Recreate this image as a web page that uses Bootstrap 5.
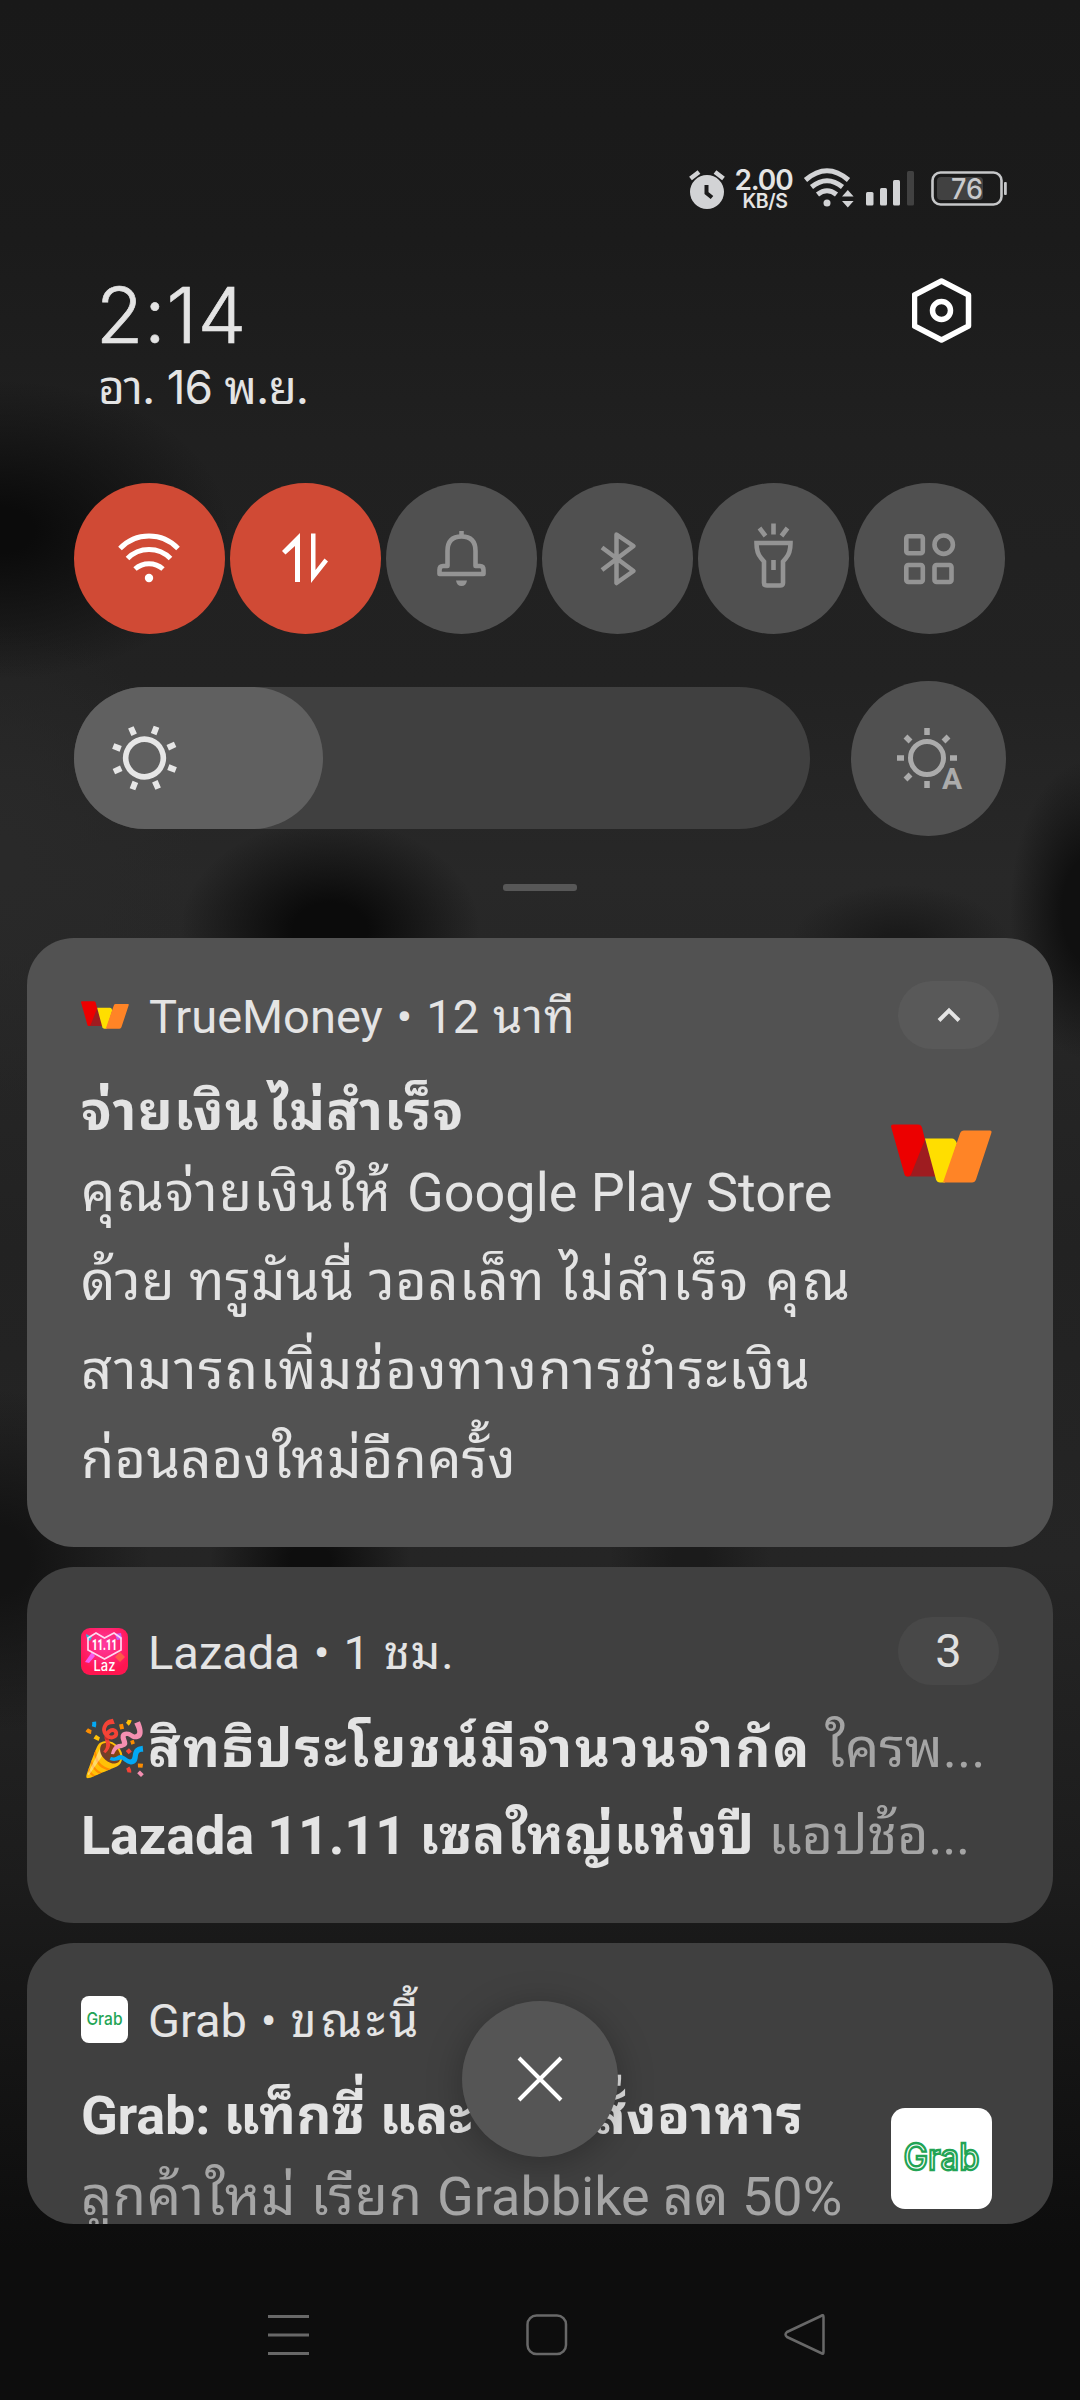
<!DOCTYPE html>
<html lang="th">
<head>
<meta charset="utf-8">
<meta name="viewport" content="width=device-width, initial-scale=1">
<title>Notifications</title>
<link href="https://cdn.jsdelivr.net/npm/bootstrap@5.3.0/dist/css/bootstrap.min.css" rel="stylesheet">
<style>
body{background:#0d0d0d;color:#e4e4e4;font-family:Roboto,"Noto Sans Thai Looped","Noto Sans Thai","Noto Sans",sans-serif}
.shade{width:1080px;height:2400px;overflow:hidden;
 background:
 radial-gradient(ellipse 230px 150px at 0 530px,#0b0b0b 15%,transparent 100%),
 radial-gradient(ellipse 150px 110px at 330px 930px,#0b0b0b 25%,transparent 100%),
 radial-gradient(ellipse 80px 150px at 1090px 910px,#101010 35%,transparent 100%),
 radial-gradient(ellipse 110px 60px at 900px 945px,#1a1a1a 20%,transparent 100%),
 radial-gradient(ellipse 150px 170px at 0 1560px,#131313 20%,transparent 100%),
 radial-gradient(ellipse 100px 90px at 310px 1560px,#0e0e0e 20%,transparent 100%),
 radial-gradient(ellipse 80px 90px at 690px 1560px,#1b1b1b 20%,transparent 100%),
 radial-gradient(ellipse 200px 240px at 0 860px,#292929 10%,transparent 100%),
 linear-gradient(#191919 0,#1b1b1b 240px,#202020 440px,#222 680px,#282828 880px,#222 1250px,#252525 1560px,#1c1c1c 1880px,#181818 1960px,#111 2150px,#0d0d0d 2250px,#0d0d0d 100%)}
svg{display:block;flex:none}
.status-row{height:213px;padding:165px 70px 0 0}
.net-speed{width:70px;height:48px;font-family:Inter,sans-serif;font-weight:600;text-align:center}
.net-speed .rate{font-size:28px;line-height:24px;letter-spacing:-1.1px;padding:3px 3px 0 0}
.net-speed .unit{font-size:19.5px;line-height:16px;letter-spacing:-.4px;margin-top:1px}
.clock-row{height:208px;margin-top:62px;padding:0 108px 0 96px}
.clock{font-family:Inter,sans-serif;font-size:77px;font-weight:300;-webkit-text-stroke:.7px #e4e4e4;line-height:80px;letter-spacing:.8px}
.today{font-family:Inter,"Noto Sans Thai Looped",sans-serif;font-size:46px;line-height:60px;margin:2px 0 0 2px;letter-spacing:-.8px}
.tiles{padding:0 75px 0 74px;height:151px}
.tile{width:151px;height:151px;padding:0;border:0;background:#505050;color:#949494}
.tile.on{background:#d04a35;color:#fff}
.bright-row{margin-top:47px;height:155px;padding:0 74px}
.slide-track{width:736px;height:142px;background:#404040;border-radius:71px;margin-bottom:1px}
.slide-fill{width:249px;height:142px;background:#606060;border-radius:71px}
.auto-btn{width:155px;height:155px;padding:0;border:0;background:#505050;color:#ababab}
.grip{width:74px;height:7px;border-radius:3px;background:#575757;margin:48px auto 47px}
.stack{gap:20px;padding:0 27px}
.note{background:#404040;border:0;border-radius:47px;padding:43px 54px 0;color:#e4e4e4;overflow:hidden;flex:none}
.note.open{background:#525252;height:609px}
.note.group{height:356px;padding-top:50px}
.note.cut{height:281px;padding-top:44px}
.note-head{height:68px}
.note-head .from{font-size:47px;line-height:60px;padding:4px 0 0 20px;white-space:nowrap;word-spacing:2.2px}
.chip{width:101px;height:68px;background:#595959;font-size:47px;line-height:68px}
.group .chip{background:#484848;color:#e0e0e0}
.ttl{font-size:54px;line-height:74px;font-weight:700;white-space:nowrap;margin-top:26px}
.open .txt:nth-child(2){margin-top:-1px}
.txt{font-size:54px;line-height:89px;white-space:nowrap}
.group .txt{line-height:87px}
.cut .ttl{line-height:81px;margin-top:24px}
.cut .txt{line-height:81px}
.dim{color:#a5a5a5}
.big-logo{margin-right:7px}
.fab{position:absolute;left:462px;top:2001px;width:156px;height:156px;padding:0;border:0;background:#555;box-shadow:0 6px 36px rgba(0,0,0,.28)}
.keys{margin-top:90px;padding:0 254px 0 266px}
</style>
</head>
<body>
<svg width="0" height="0" class="position-absolute" aria-hidden="true"><defs>
<g id="tm-mark">
<path d="M16 52 30 12 34 16 45 52Z" fill="#9e1c20"/>
<path d="M0 2Q0 0 2 0H27Q30 0 31 3L34 15 20 50Q19 52 17 52H16Q14 52 13.500 50Z" fill="#ec0000"/>
<path d="M34 14H61Q64 14 66 19L54 58H49Q46 58 45 55Z" fill="#ffde00"/>
<path d="M52 58 69 9Q70 6 73 6H99Q101 6 100.500 8L85 55Q84 58 81 58Z" fill="#ff8426"/>
</g></defs></svg>

<main class="shade position-relative d-flex flex-column">
 <header class="status-row d-flex justify-content-end flex-shrink-0">
  <svg width="42" height="48" viewBox="688 165 42 48"><circle cx="707" cy="192" r="17" fill="#d2d3d5"/><path d="M690.500 178.500 699 172M723.500 178.500 715 172" stroke="#d2d3d5" stroke-width="4.500"/><path d="M706.500 185V193L712 197.500" fill="none" stroke="#1c1c1c" stroke-width="4"/></svg>
  <div class="net-speed"><div class="rate">2.00</div><div class="unit">KB/S</div></div>
  <svg width="58" height="48" viewBox="800 165 58 48" fill="none" stroke="#d2d3d5" stroke-width="5"><path d="M805.500 180Q827 161.500 848.500 180M811.500 187Q827 174.500 842.500 187M817.500 194.500Q827 187 836.500 194.500"/><circle cx="827" cy="203" r="3.500" fill="#d2d3d5" stroke="none"/><path d="M842 196.500 847.800 190 853.600 196.500ZM842 201H853.600L847.800 207.500Z" fill="#d2d3d5" stroke="none"/></svg>
  <svg width="64" height="48" viewBox="858 165 64 48" fill="#d2d3d5"><rect x="866" y="192" width="7.500" height="13.500" rx="1.500"/><rect x="880" y="188" width="7" height="17.500" rx="1.500"/><rect x="893" y="180" width="7" height="25.500" rx="1.500"/><rect x="907" y="171" width="7" height="34.500" rx="1.500" fill="#414141"/></svg>
  <svg width="88" height="48" viewBox="922 165 88 48"><rect x="932.500" y="172.500" width="69" height="32" rx="8" fill="none" stroke="#c6c7c9" stroke-width="2.600"/><rect x="937" y="177" width="46" height="23" rx="4" fill="#414141"/><rect x="1004" y="182" width="2.800" height="13" rx="1" fill="#c6c7c9"/><text x="967" y="198.500" text-anchor="middle" font-family="Inter" font-weight="500" font-size="28" fill="#c9cacc" textLength="32" lengthAdjust="spacingAndGlyphs">76</text></svg>
 </header>

 <section class="clock-row d-flex justify-content-between align-items-start flex-shrink-0">
  <div><div class="clock">2:14</div><div class="today">อา. 16 พ.ย.</div></div>
  <svg width="60" height="70" viewBox="912 275 60 70" fill="none" stroke="#fff" stroke-width="5.500" stroke-linejoin="round"><path d="M941.500 281 968.500 295V326L941.500 340 914.500 326V295Z"/><circle cx="941.500" cy="310.500" r="9"/></svg>
 </section>

 <section class="tiles d-flex justify-content-between flex-shrink-0">
  <button class="btn tile on rounded-circle" aria-label="Wi-Fi"><svg width="151" height="151" viewBox="74 483 151 151" fill="none" stroke="currentColor" stroke-width="5"><path d="M120 548.500A40 40 0 0 1 178 548.500M127.500 558.500A30 30 0 0 1 170.500 558.500M135 569A21 21 0 0 1 163 569"/><circle cx="149" cy="578" r="4.200" fill="currentColor" stroke="none"/></svg></button>
  <button class="btn tile on rounded-circle" aria-label="Data"><svg width="151" height="151" viewBox="230 483 151 151" fill="currentColor"><path d="M300 533V582H295V546L285.500 554.500 282 551ZM311 533.500H315.500V570L324.500 558.500 328 561.500 311 583Z"/></svg></button>
  <button class="btn tile rounded-circle" aria-label="Silent"><svg width="151" height="151" viewBox="386 483 151 151" fill="none" stroke="currentColor" stroke-width="4.600"><path d="M447.500 566V551Q447.500 536.500 461.500 536.500T475.500 551V566H480Q483.500 566 483.500 570V574H439.500V570Q439.500 566 443 566Z" stroke-linejoin="round"/><path d="M461.500 531V536"/><path d="M456 580.500H467Q466 586 461.500 586T456 580.500Z" fill="currentColor" stroke="none"/></svg></button>
  <button class="btn tile rounded-circle" aria-label="Bluetooth"><svg width="151" height="151" viewBox="542 483 151 151" fill="none" stroke="currentColor" stroke-width="4.500" stroke-linejoin="round"><path d="M602 547.500 633.500 571 616.500 583V534.500L633.500 546 602 570"/></svg></button>
  <button class="btn tile rounded-circle" aria-label="Flashlight"><svg width="151" height="151" viewBox="698 483 151 151" fill="none" stroke="currentColor" stroke-width="4.600"><path d="M756.500 543H790.500Q790.500 553 786 558L783 561.500V583Q783 585.500 780 585.500H767Q764 585.500 764 583V561.500L761 558Q756.500 553 756.500 543ZM773.500 560V570M773.500 523.500V534.500M759.500 528 765.500 536M787.500 528 781.500 536"/></svg></button>
  <button class="btn tile rounded-circle" aria-label="More"><svg width="151" height="151" viewBox="854 483 151 151" fill="none" stroke="currentColor" stroke-width="4.600"><rect x="906.300" y="536.300" width="16.500" height="17" rx="2"/><rect x="906.300" y="565" width="16.500" height="17" rx="2"/><rect x="934.500" y="565" width="17" height="17" rx="2"/><circle cx="943.700" cy="544.700" r="9.200"/></svg></button>
 </section>

 <section class="bright-row d-flex justify-content-between align-items-center flex-shrink-0">
  <div class="slide-track"><div class="slide-fill"><svg width="142" height="142" viewBox="74 687 142 142" fill="none" stroke="#e6e6e6"><g transform="translate(144.500 758) rotate(21)"><circle r="18.800" stroke-width="5.600"/><path stroke-width="6" d="M0-25.500V-33.500M0 25.500V33.500M25.500 0H33.500M-25.500 0H-33.500M18-18 23.700-23.700M-18-18-23.700-23.700M18 18 23.700 23.700M-18 18-23.700 23.700"/></g></svg></div></div>
  <button class="btn auto-btn rounded-circle" aria-label="Auto brightness"><svg width="155" height="155" viewBox="851 681 155 155" fill="none" stroke="currentColor"><g transform="translate(927 758)"><circle r="16.500" stroke-width="5"/><path stroke-width="5.500" d="M0-23V-30M0 23V30M23 0H30M-23 0H-30M16.500-16.500 21.500-21.500M-16.500-16.500-21.500-21.500M-16.500 16.500-21.500 21.500"/></g><text x="952" y="788.500" text-anchor="middle" font-family="Roboto" font-weight="700" font-size="30" fill="currentColor" stroke="none">A</text></svg></button>
 </section>

 <div class="grip flex-shrink-0"></div>

 <section class="stack d-flex flex-column flex-shrink-0">
  <article class="card note open">
   <div class="note-head d-flex align-items-center">
    <svg width="48" height="28" viewBox="0 0 101 58"><use href="#tm-mark"/></svg>
    <div class="from flex-grow-1">TrueMoney • 12 <span style="letter-spacing:1px">นาที</span></div>
    <div class="chip rounded-pill d-flex align-items-center justify-content-center"><svg width="24" height="16" viewBox="0 0 24 16" fill="none" stroke="#e4e4e4" stroke-width="4"><path d="M2 13.500 12 3.500 22 13.500"/></svg></div>
   </div>
   <div class="d-flex justify-content-between align-items-start">
    <div>
     <div class="ttl" style="letter-spacing:1.3px">จ่ายเงิน<span style="margin-left:7px">ไม่สำเร็จ</span></div>
     <div class="txt"><span style="letter-spacing:1.2px">คุณจ่ายเงินให้ </span>Google Play Store</div>
     <div class="txt"><span style="letter-spacing:.6px">ด้วย ทรูมันนี่ วอลเล็ท </span><span style="letter-spacing:2px">ไม่สำเร็จ </span><span style="letter-spacing:2.6px">คุณ</span></div>
     <div class="txt" style="letter-spacing:1.6px">สามารถเพิ่มช่องทางการชำระเงิน</div>
     <div class="txt" style="letter-spacing:.3px">ก่อนลองใหม่อีกครั้ง</div>
    </div>
    <svg class="big-logo" style="margin-top:75px" width="101" height="59" viewBox="0 0 101 58"><use href="#tm-mark"/></svg>
   </div>
  </article>

  <article class="card note group">
   <div class="note-head d-flex align-items-center">
    <svg width="47" height="47" viewBox="0 0 47 47"><defs><radialGradient id="lz" cx=".5" cy=".35" r=".6"><stop offset="0" stop-color="#ff3aa0"/><stop offset="1" stop-color="#ff1550"/></radialGradient></defs><rect width="47" height="47" rx="9" fill="url(#lz)"/><path d="M4 34 11 24 14 28 8 35Z" fill="#f45bf0"/><path d="M34 6 40 5 41 11 36 12Z" fill="#c95cf5"/><path d="M5 6 11 9 9 13 6 11Z" fill="#22bfe0"/><path d="M34 29 39 24 44 29 39 34Z" fill="#ff5a4a"/><path d="M7 10 15 5 23.500 10 33 5 40 10V22L23.500 31 7 22Z" fill="none" stroke="#ffd9f0" stroke-width="1.700"/><text x="23.500" y="22" text-anchor="middle" font-family="Roboto" font-weight="900" font-size="15" fill="#fff" textLength="25" lengthAdjust="spacingAndGlyphs">11.11</text><text x="23.500" y="42.500" text-anchor="middle" font-family="Inter" font-weight="500" font-size="15" fill="#fff" textLength="22" lengthAdjust="spacingAndGlyphs">Laz</text></svg>
    <div class="from flex-grow-1">Lazada • 1 <span style="letter-spacing:.8px">ชม.</span></div>
    <div class="chip rounded-pill text-center">3</div>
   </div>
   <div class="txt" style="margin-top:20px">🎉<b style="letter-spacing:2.250px">สิทธิประโยชน์มีจำนวนจำกัด</b> <span class="dim">ใครพ...</span></div>
   <div class="txt"><b><span style="letter-spacing:-.15px">Lazada 11.11 </span><span style="letter-spacing:.6px">เซลใหญ่แห่งปี</span></b> <span class="dim" style="letter-spacing:-.3px">แอปช้อ...</span></div>
  </article>

  <article class="card note cut">
   <div class="note-head d-flex align-items-center">
    <svg width="47" height="47" viewBox="0 0 47 47"><rect width="47" height="47" rx="8" fill="#fff"/><text x="23.500" y="29" text-anchor="middle" font-family="Inter" font-weight="500" font-size="17" fill="#23a455" textLength="36" lengthAdjust="spacingAndGlyphs">Grab</text></svg>
    <div class="from">Grab • <span style="letter-spacing:4px">ขณะนี้</span></div>
   </div>
   <div class="d-flex justify-content-between align-items-start">
    <div>
     <div class="ttl"><span style="letter-spacing:-.2px">Grab: </span><span style="letter-spacing:.5px">แท็กซี่ และ แอปสั่งอาหาร</span></div>
     <div class="txt dim"><span style="letter-spacing:.8px">ลูกค้าใหม่ เรียก </span>Grabbike ลด 50%</div>
    </div>
    <svg class="big-logo" style="margin-top:54px" width="101" height="104" viewBox="0 -3 101 104"><rect width="101" height="101" rx="14" fill="#fff"/><text x="50.500" y="62" text-anchor="middle" font-family="Inter" font-weight="500" font-size="37" fill="#fff" stroke="#23a455" stroke-width="2.400" textLength="76" lengthAdjust="spacingAndGlyphs">Grab</text></svg>
   </div>
  </article>
 </section>

 <nav class="keys d-flex justify-content-between flex-shrink-0">
  <svg width="44" height="42" viewBox="0 0 44 42" stroke="#686868" stroke-width="3"><path d="M2 2.500H43M2 21H43M2 39.500H43"/></svg>
  <svg width="42" height="42" viewBox="0 0 42 42" fill="none" stroke="#686868" stroke-width="2.500"><rect x="1.500" y="1.500" width="38.500" height="38.500" rx="9"/></svg>
  <svg width="42" height="42" viewBox="0 0 42 42" fill="none" stroke="#686868" stroke-width="2.500" stroke-linejoin="round"><path d="M37 2Q39.500 0 39.500 3V38Q39.500 41 37 39L3 23Q0 20.500 3 18Z"/></svg>
 </nav>

 <button class="btn fab rounded-circle" aria-label="Clear all"><svg width="156" height="156" viewBox="0 0 156 156" stroke="#fff" stroke-width="4"><path d="M57 57 99 99M99 57 57 99"/></svg></button>
</main>
</body>
</html>
